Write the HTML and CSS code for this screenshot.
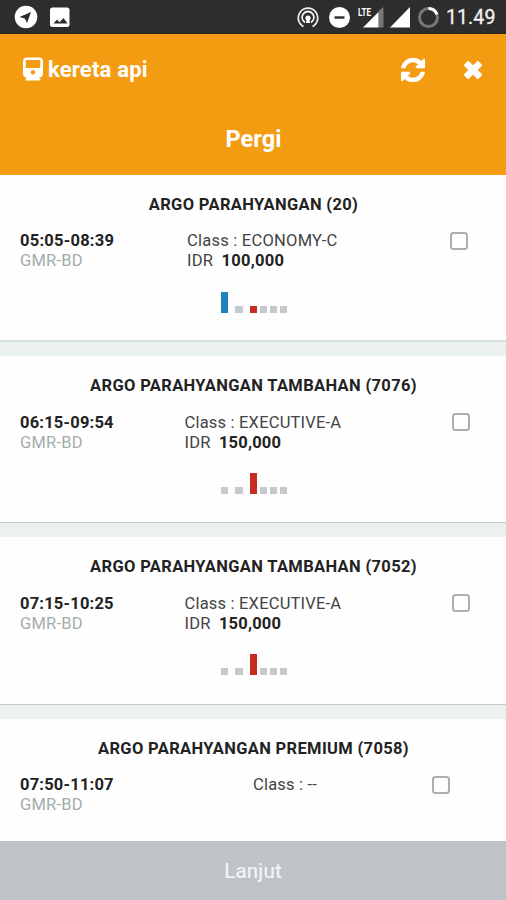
FILE: index.html
```html
<!DOCTYPE html>
<html lang="id">
<head>
<meta charset="utf-8">
<title>kereta api</title>
<link rel="stylesheet" href="styles.css">
</head>
<body>
<div class="app">
  <div class="status">
    <svg class="status-left" width="60" height="24" viewBox="0 0 60 24">
      <circle cx="12" cy="12" r="11.3" fill="#fff"/>
      <path d="M5.500 12 17 7l-4 11-2.200-4.600z" fill="#2d2d2d"/>
      <rect x="36" y="2.500" width="19.500" height="19.500" rx="2.500" fill="#fff"/>
      <path d="M39.500 18.500l3.500-4 2.500 2.800 4-4.300 4 5.500z" fill="#2d2d2d"/>
    </svg>
    <svg class="status-right" width="144" height="26" viewBox="0 0 144 26">
      <g fill="none" stroke="#eee" stroke-width="1.8">
        <path d="M6.500 22.500a9.700 9.700 0 1 1 9 0M8 18.500a5.900 5.900 0 1 1 6 0"/>
      </g>
      <circle cx="11" cy="14" r="2.600" fill="#fff"/>
      <path d="M9 19l1-5h2l1 5z" fill="#fff"/>
      <circle cx="42.500" cy="13.500" r="10.500" fill="#fff"/>
      <path d="M37.500 13.500h10" stroke="#2d2d2d" stroke-width="2.400"/>
      <path d="M81.500 7v16.500h5V3z" fill="#777"/>
      <path d="M66 23.500 81.500 8v15.500z" fill="#fff"/>
      <text class="lte" x="61" y="12" textLength="13" lengthAdjust="spacingAndGlyphs">LTE</text>
      <path d="M93 23.500 113 3v20.500z" fill="#fff"/>
      <circle cx="131.500" cy="13.500" r="9" fill="none" stroke="#777" stroke-width="3"/>
      <path d="M131.500 4.500a9 9 0 0 1 8.500 6" fill="none" stroke="#fff" stroke-width="3"/>
    </svg>
    <span class="clock">11.49</span>
  </div>
  <header class="header">
    <div class="toolbar">
      <svg class="train" width="20" height="24" viewBox="0 0 20 24">
        <path fill="#fff" fill-rule="evenodd" d="M4 .5h12Q20 .5 20 4.500v12q0 4-4 4l1.500 1.500v1.500h-15V22L4 20.500q-4 0-4-4v-12Q0 .5 4 .5zM2.800 3v8h14.400V3zm7.200 10a2.300 2.300 0 1 0 0 4.600 2.300 2.300 0 0 0 0-4.600z"/>
      </svg>
      <span class="brand">kereta api</span>
      <svg class="refresh" width="24" height="24" viewBox="0 0 1536 1536">
        <path fill="#fff" stroke="#fff" stroke-width="40" d="M1511 928q0 5-1 7-64 268-268 434.500T764 1536q-146 0-282.500-55T238 1324l-129 129q-19 19-45 19t-45-19-19-45V960q0-26 19-45t45-19h448q26 0 45 19t19 45-19 45l-137 137q71 66 161 102t187 36q134 0 250-65t186-179q11-17 53-117 8-23 30-23h192q13 0 22.500 9.500t9.500 22.500zm25-800v448q0 26-19 45t-45 19h-448q-26 0-45-19t-19-45 19-45l138-138Q969 256 768 256q-134 0-250 65T332 500q-11 17-53 117-8 23-30 23H50q-13 0-22.500-9.500T18 608v-7q65-268 270-434.500T768 0q146 0 284 55.500T1297 212l130-129q19-19 45-19t45 19 19 45z"/>
      </svg>
      <svg class="close" width="20" height="20" viewBox="0 0 20 20"><path d="M5.200 2 10 6.800 14.800 2 18 5.200 13.200 10l4.800 4.800-3.200 3.200L10 13.200 5.200 18 2 14.800 6.800 10 2 5.200z" fill="#fff" stroke="#fff" stroke-width="2" stroke-linejoin="round"/></svg>
    </div>
    <h1 class="heading">Pergi</h1>
  </header>
  <main class="list">
    <section class="card first">
      <h2 class="name">ARGO PARAHYANGAN (20)</h2>
      <div class="row economy">
        <div><div class="time">05:05-08:39</div><div class="route">GMR-BD</div></div>
        <div><div class="class">Class : ECONOMY-C</div><div class="fare">IDR <b>100,000</b></div></div>
        <span class="check"></span>
      </div>
      <div class="bars"><i class="tall blue"></i><i></i><i class="red"></i><i></i><i></i><i></i></div>
    </section>
    <section class="card">
      <h2 class="name">ARGO PARAHYANGAN TAMBAHAN (7076)</h2>
      <div class="row">
        <div><div class="time">06:15-09:54</div><div class="route">GMR-BD</div></div>
        <div><div class="class">Class : EXECUTIVE-A</div><div class="fare">IDR <b>150,000</b></div></div>
        <span class="check"></span>
      </div>
      <div class="bars"><i></i><i></i><i class="tall red"></i><i></i><i></i><i></i></div>
    </section>
    <section class="card">
      <h2 class="name">ARGO PARAHYANGAN TAMBAHAN (7052)</h2>
      <div class="row">
        <div><div class="time">07:15-10:25</div><div class="route">GMR-BD</div></div>
        <div><div class="class">Class : EXECUTIVE-A</div><div class="fare">IDR <b>150,000</b></div></div>
        <span class="check"></span>
      </div>
      <div class="bars"><i></i><i></i><i class="tall red"></i><i></i><i></i><i></i></div>
    </section>
    <section class="card">
      <h2 class="name">ARGO PARAHYANGAN PREMIUM (7058)</h2>
      <div class="row empty">
        <div><div class="time">07:50-11:07</div><div class="route">GMR-BD</div></div>
        <div><div class="class">Class : --</div></div>
        <span class="check"></span>
      </div>
    </section>
  </main>
  <footer class="next">Lanjut</footer>
</div>
</body>
</html>
```
FILE: styles.css
```css
* { box-sizing: border-box; }
body { margin: 0; font-family: Roboto, sans-serif; color: #222; }
h1, h2 { margin: 0; }
.app { width: 506px; height: 900px; display: flex; flex-direction: column; overflow: hidden; background: #ebf0f1; }

.status { height: 34px; flex: none; display: flex; align-items: center; padding: 0 11px 0 14px; background: #2d2d2d; border-bottom: 1px solid #282420; }
.status-right { margin: 0 5px 0 auto; }
.lte { font: bold 11px Roboto, sans-serif; fill: #fff; }
.clock { width: 49px; font-size: 19.5px; line-height: 34px; color: #f2f2f2; letter-spacing: 0.1px; white-space: nowrap; padding-top: 3px; -webkit-text-stroke: 0.3px #f2f2f2; }

.header { height: 141px; flex: none; background: #f39c12; color: #fff; }
.toolbar { height: 71px; display: flex; align-items: center; padding: 0 23px 0 23px; }
.train { margin-bottom: 2px; }
.brand { margin-left: 5px; font-size: 22px; font-weight: 700; line-height: 26px; letter-spacing: 0.2px; }
.refresh { margin-left: auto; margin-right: 38px; }
.close { margin-top: 1px; }
.heading { font-size: 23.5px; line-height: 30px; font-weight: 700; text-align: center; margin-top: 19px; padding-left: 1px; letter-spacing: 0.1px; }

.list { flex: 1; min-height: 0; overflow: hidden; }
.card { height: 167.4px; margin-bottom: 14px; padding: 20px 20px 0; background: #fefefe; border-bottom: 1.5px solid #c5c9ca; }
.card.first { height: 167px; border-bottom: 2px solid #d9dee0; }
.name { font-size: 16.5px; line-height: 20px; font-weight: 700; text-align: center; letter-spacing: 0.34px; padding-left: 1px; }
.row { display: grid; grid-template-columns: 164.5px 267px 18px; margin-top: 16.5px; font-size: 16.5px; line-height: 20px; letter-spacing: 0.2px; }
.row.economy { grid-template-columns: 167px 263px 18px; margin-top: 16px; letter-spacing: 0.24px; }
.row.economy + .bars { margin-top: 21px; }
.row.empty { grid-template-columns: 233px 179px 18px; }
.time { font-weight: 700; }
.route { color: #a3acad; }
.class, .fare { color: #444; }
.fare b { color: #222; margin-left: 4px; }
.check { width: 18px; height: 18px; margin-top: 0.5px; border: 2px solid #a9afb0; border-radius: 3.5px; background: #fff; }
.bars { display: flex; align-items: flex-end; height: 21px; margin: 20.5px 0 0 201px; }
.bars i { width: 7.3px; height: 7px; margin-right: 2.7px; background: #c5c9cb; }
.bars i:nth-child(1), .bars i:nth-child(2) { margin-right: 7px; }
.bars .tall { height: 21px; }
.bars .blue { background: #1f82bd; }
.bars .red { background: #c42d20; }

.next { height: 59px; flex: none; background: #bdc3c7; color: #f4f6f7; font-size: 20.5px; line-height: 60px; text-align: center; letter-spacing: 0.2px; -webkit-text-stroke: 0.2px #f4f6f7; }
```
